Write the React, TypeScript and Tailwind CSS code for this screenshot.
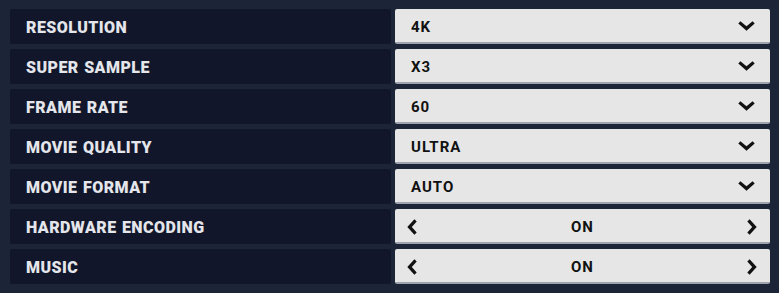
import React from "react";

type Row = { label: string; value: string; kind: "select" | "toggle" };

const rows: Row[] = [
  { label: "RESOLUTION", value: "4K", kind: "select" },
  { label: "SUPER SAMPLE", value: "X3", kind: "select" },
  { label: "FRAME RATE", value: "60", kind: "select" },
  { label: "MOVIE QUALITY", value: "ULTRA", kind: "select" },
  { label: "MOVIE FORMAT", value: "AUTO", kind: "select" },
  { label: "HARDWARE ENCODING", value: "ON", kind: "toggle" },
  { label: "MUSIC", value: "ON", kind: "toggle" },
];

const ChevronDown = () => (
  <svg width="17" height="10" viewBox="0 0 17 10" className="shrink-0 mt-[1px]">
    <path d="M0.3 2.4 L2.4 0.3 L8.5 5.2 L14.6 0.3 L16.7 2.4 L8.5 9.7 Z" fill="#111" />
  </svg>
);

const ChevronLeft = () => (
  <svg width="10" height="16" viewBox="0 0 10 16" className="shrink-0 mt-[2px]">
    <path d="M7.4 0.3 L9.7 2.4 L4.8 8 L9.7 13.6 L7.4 15.7 L0.3 8 Z" fill="#111" />
  </svg>
);

const ChevronRight = () => (
  <svg width="10" height="16" viewBox="0 0 10 16" className="shrink-0 mt-[2px]">
    <path d="M2.6 0.3 L0.3 2.4 L5.2 8 L0.3 13.6 L2.6 15.7 L9.7 8 Z" fill="#111" />
  </svg>
);

export default function App() {
  return (
    <div className="w-[779px] h-[293px] bg-[#1c2438] pt-[9px] pl-[10px] pr-[9px] flex flex-col gap-[5px]">
      {rows.map((row) => (
        <div key={row.label} className="flex h-[35px] gap-[4px]">
          <div className="w-[381px] bg-[#12162a] rounded-[2px] flex items-center pl-[16px] pt-[2px]">
            <span className="font-['Roboto',sans-serif] font-black text-[16px] text-[#e4e6eb] tracking-[0.45px] [word-spacing:1px]">
              {row.label}
            </span>
          </div>
          <div className="flex-1 bg-[#e6e6e6] rounded-[2px] border-b-2 border-[#9ea3ad] flex items-center">
            {row.kind === "select" ? (
              <div className="flex items-center justify-between w-full pl-[16px] pr-[15px]">
                <span className="font-['Roboto',sans-serif] font-bold text-[15px] text-[#111] tracking-[1px] pt-[3px]">
                  {row.value}
                </span>
                <ChevronDown />
              </div>
            ) : (
              <div className="flex items-center justify-between w-full pl-[12px] pr-[13px]">
                <ChevronLeft />
                <span className="font-['Roboto',sans-serif] font-bold text-[15px] text-[#111] tracking-[1px] pt-[3px] pl-[1px]">
                  {row.value}
                </span>
                <ChevronRight />
              </div>
            )}
          </div>
        </div>
      ))}
    </div>
  );
}
